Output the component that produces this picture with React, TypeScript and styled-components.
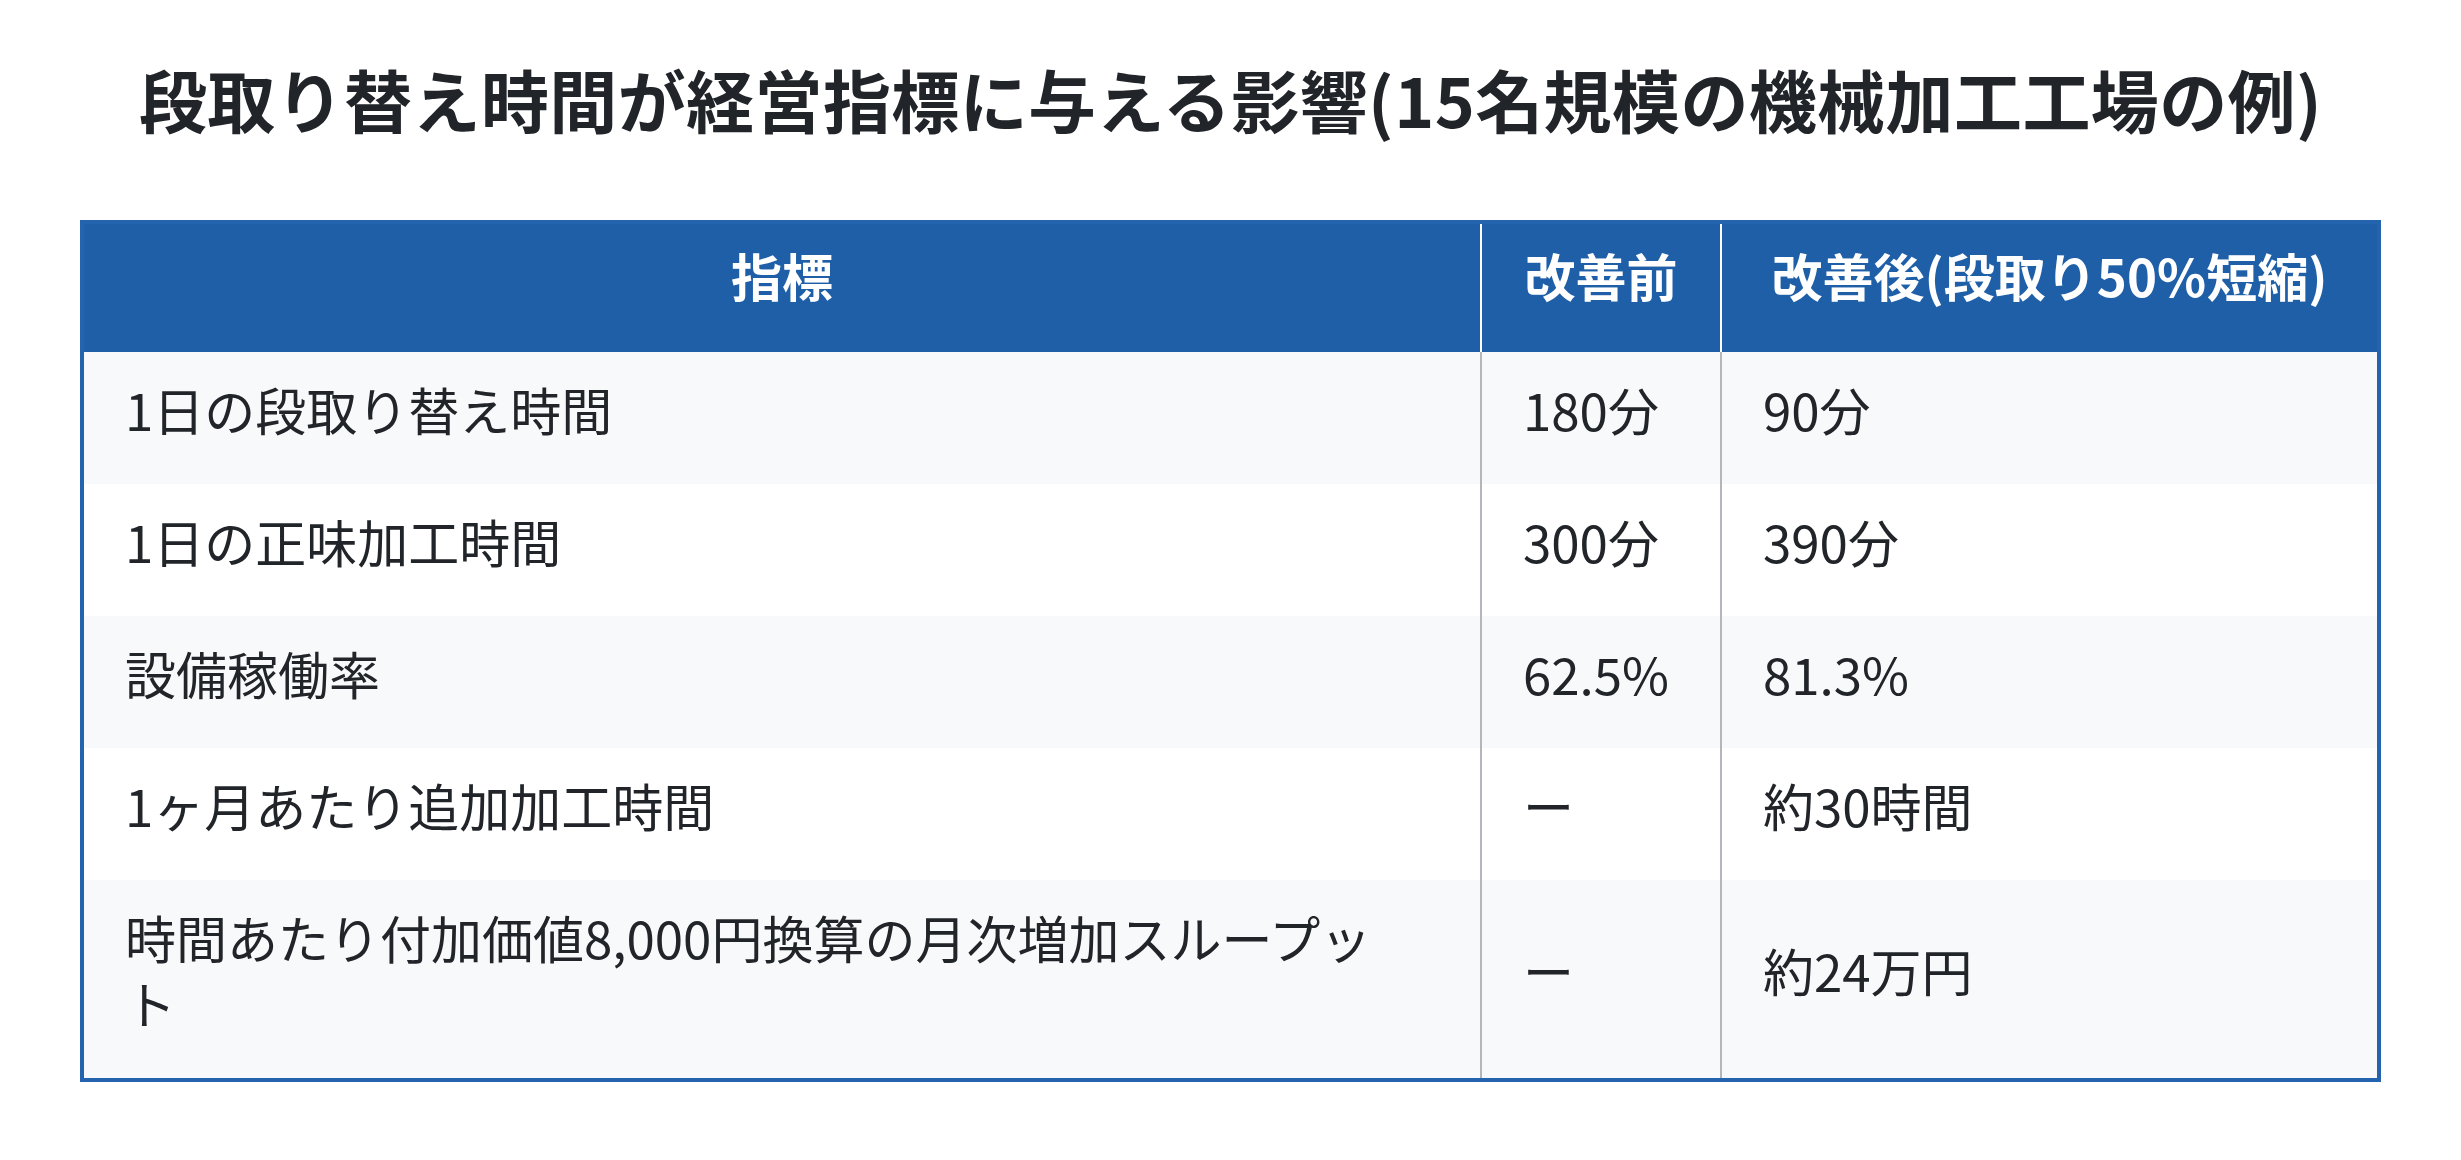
import React from "react";
import styled, { createGlobalStyle } from "styled-components";

const GlobalStyle = createGlobalStyle`
  html, body {
    margin: 0;
    padding: 0;
    background: #ffffff;
  }
  body {
    font-family: "Noto Sans CJK JP", "Noto Sans", sans-serif;
    color: #212529;
  }
`;

const Page = styled.div`
  padding: 58px 80px 0;
  box-sizing: border-box;
  width: 2461px;
`;

const Title = styled.h1`
  margin: 0 0 80px;
  font-size: 68px;
  line-height: 82px;
  font-weight: 700;
  letter-spacing: 0.4px;
  text-align: center;
  color: #212529;
`;

const Table = styled.table`
  width: 100%;
  border-collapse: separate;
  border-spacing: 0;
  border: 4px solid #2463ad;
  table-layout: fixed;
`;

const HeadCell = styled.th<{ $divider?: boolean }>`
  background: #1f5fa8;
  color: #ffffff;
  font-size: 51px;
  line-height: 65px;
  font-weight: 700;
  text-align: center;
  padding: 19px 41px 44px;
  border-left: ${(p) => (p.$divider ? "2px solid #ffffff" : "none")};
  white-space: nowrap;
`;

const Row = styled.tr<{ $shade: boolean }>`
  background: ${(p) => (p.$shade ? "#f8f9fa" : "#ffffff")};
`;

const Cell = styled.td<{ $divider?: boolean; $label?: boolean }>`
  font-size: 51px;
  line-height: 66px;
  font-weight: 400;
  color: #212529;
  text-align: left;
  vertical-align: middle;
  padding: 24px ${(p) => (p.$label ? "80px" : "41px")} 42px 41px;
  border-left: ${(p) => (p.$divider ? "2px solid #b3b7bb" : "none")};
`;

const rows: [string, string, string][] = [
  ["1日の段取り替え時間", "180分", "90分"],
  ["1日の正味加工時間", "300分", "390分"],
  ["設備稼働率", "62.5%", "81.3%"],
  ["1ヶ月あたり追加加工時間", "ー", "約30時間"],
  ["時間あたり付加価値8,000円換算の月次増加スループット", "ー", "約24万円"],
];

export default function App() {
  return (
    <Page>
      <GlobalStyle />
      <Title>段取り替え時間が経営指標に与える影響(15名規模の機械加工工場の例)</Title>
      <Table>
        <colgroup>
          <col style={{ width: "1396px" }} />
          <col style={{ width: "240px" }} />
          <col style={{ width: "657px" }} />
        </colgroup>
        <thead>
          <tr>
            <HeadCell>指標</HeadCell>
            <HeadCell $divider>改善前</HeadCell>
            <HeadCell $divider>改善後(段取り50%短縮)</HeadCell>
          </tr>
        </thead>
        <tbody>
          {rows.map((r, i) => (
            <Row key={i} $shade={i % 2 === 0}>
              <Cell $label>{r[0]}</Cell>
              <Cell $divider>{r[1]}</Cell>
              <Cell $divider>{r[2]}</Cell>
            </Row>
          ))}
        </tbody>
      </Table>
    </Page>
  );
}
